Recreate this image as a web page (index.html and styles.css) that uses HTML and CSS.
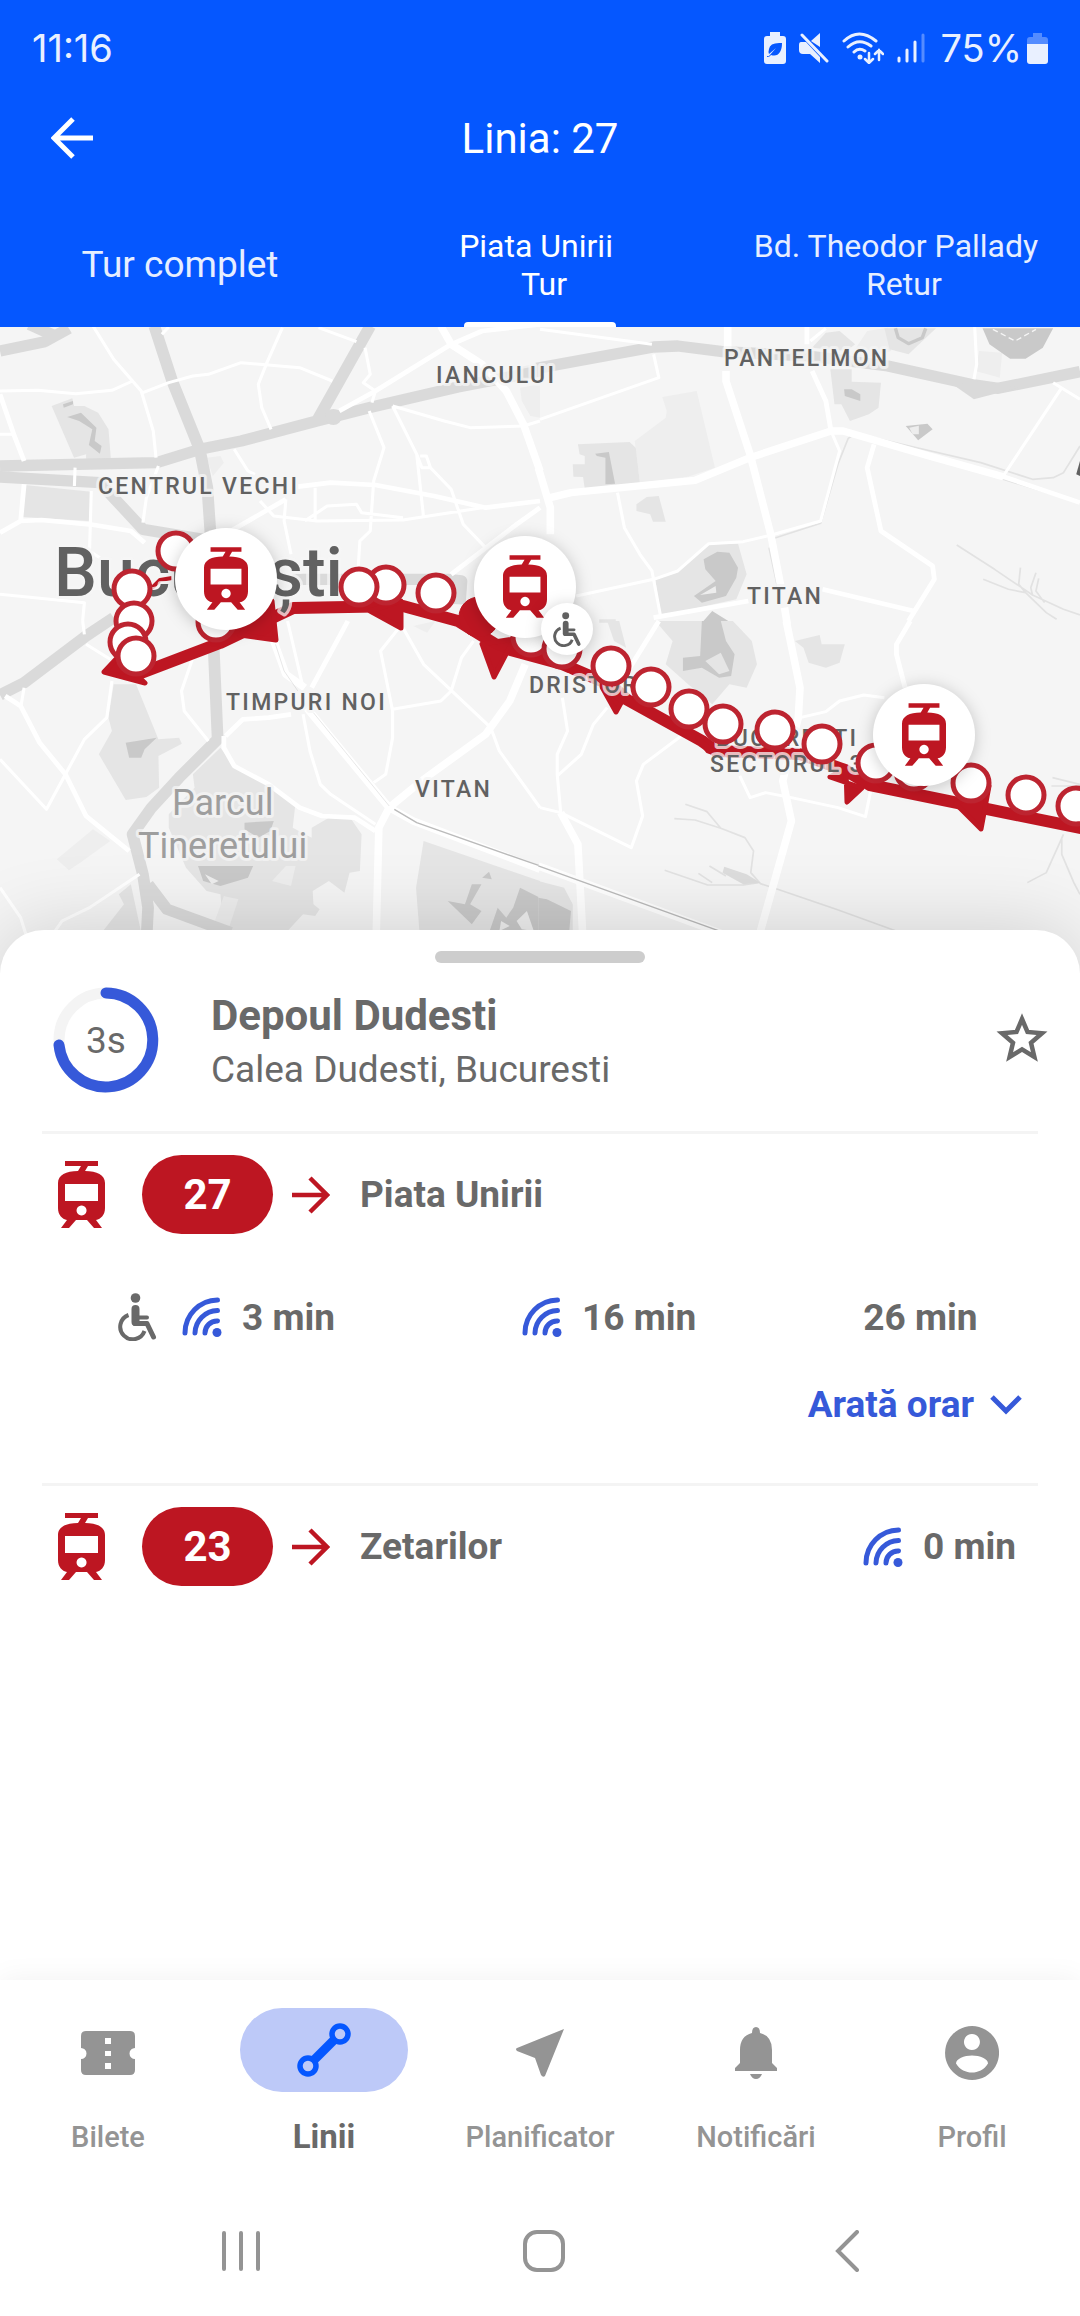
FILE: index.html
```html
<!DOCTYPE html>
<html lang="ro">
<head>
<meta charset="UTF-8">
<meta name="viewport" content="width=device-width, initial-scale=1.0">
<title>Linia: 27</title>
<link rel="stylesheet" href="styles.css">
</head>
<body>

  <!-- Shared icons -->
  <svg class="sprite" aria-hidden="true">
    <symbol id="tram" viewBox="0 0 47 67">
      <path fill-rule="evenodd" d="M7 0H40V5H30L27 10C39 10 47 14 47 22V47C47 54 43 58 38 59L44 67H36L29 59H18L11 67H3L9 59C4 58 0 54 0 47V22C0 14 8 10 20 10L23 5H7ZM7 23V40H40V23ZM23.500 44.500A5 5 0 1 0 23.600 44.500Z"/>
    </symbol>
    <symbol id="live" viewBox="0 0 40 40">
      <g fill="none" stroke="currentColor" stroke-width="5" stroke-linecap="round">
        <path d="M35.500 3A33 33 0 0 0 3 36M35.500 13.500A23 23 0 0 0 13 36M35.500 24A12 12 0 0 0 23 36"/>
      </g>
      <circle cx="35" cy="35.500" r="4.500"/>
    </symbol>
    <symbol id="wheelchair" viewBox="0 0 40 48">
      <circle cx="17.500" cy="5" r="4.800"/>
      <g fill="none" stroke="currentColor" stroke-linecap="round" stroke-linejoin="round">
        <path d="M17.500 16V29" stroke-width="8"/>
        <path d="M19 24.500H29" stroke-width="4"/>
        <path d="M17 30.500H29L35.500 44" stroke-width="5"/>
        <path d="M10.500 22A12.500 12.500 0 1 0 26.500 38" stroke-width="4" stroke-linecap="butt"/>
      </g>
    </symbol>
    <symbol id="arrow" viewBox="0 0 38 38">
      <path d="M0 19H35M18 2L35 19L18 36" fill="none" stroke="currentColor" stroke-width="4.500"/>
    </symbol>
  </svg>

  <header class="header">
    <div class="status">
      <span>11:16</span>
      <div class="status-icons">
        <svg width="22" height="32" viewBox="0 0 22 32"><path fill="currentColor" d="M6 0H16V4H19Q22 4 22 7V29Q22 32 19 32H3Q0 32 0 29V7Q0 4 3 4H6Z"/><path fill="#0557ff" d="M18 11Q6 10 5 17Q4 20 5 22L12 16L5 24H3V25Q6 25 7 23Q13 25 16 20Q18 17 18 11Z"/></svg>
        <svg width="30" height="32" viewBox="0 0 30 32"><path fill="currentColor" d="M21 1V15L12 9ZM2 10H7L21 25V31L11 22H4Q0 22 0 18V13Q0 10 2 10Z"/><path d="M3 3L28 29" stroke="currentColor" stroke-width="3" stroke-linecap="round"/></svg>
        <svg width="42" height="32" viewBox="0 0 42 32"><g fill="none" stroke="currentColor" stroke-width="3" stroke-linecap="round"><path d="M2 9Q17 -5 34 9M6 15Q17 5 29 14M12 20Q17 15 23 19"/><path d="M27 21V30M23 27L27 31L31 27M37 28V18M33 22L37 18L41 22" stroke-width="2.500"/></g><circle cx="18" cy="25" r="2.500" fill="currentColor"/></svg>
        <svg width="28" height="30" viewBox="0 0 28 30"><g stroke="currentColor" stroke-width="3" stroke-linecap="round"><path d="M2 25V28M10 17V28M18 9V28"/><path d="M26 2V28" opacity=".35"/></g></svg>
        <span class="percent">75%</span>
        <svg width="21" height="31" viewBox="0 0 21 31"><path fill="currentColor" opacity=".35" d="M6 0H15V4H18Q21 4 21 7V11H0V7Q0 4 3 4H6Z"/><path fill="currentColor" d="M0 11H21V28Q21 31 18 31H3Q0 31 0 28Z"/></svg>
      </div>
    </div>

    <div class="titlebar">
      <button class="icon-btn" type="button" aria-label="Înapoi">
        <svg width="42" height="42" viewBox="0 0 42 42"><path d="M42 21H4M22 2L3 21L22 40" fill="none" stroke="currentColor" stroke-width="5"/></svg>
      </button>
      <h1>Linia: 27</h1>
    </div>

    <div class="tabs" role="tablist">
      <button class="tab tab-full" type="button" role="tab">Tur complet</button>
      <button class="tab active" type="button" role="tab" aria-selected="true">Piata Unirii&nbsp;<br>&nbsp;Tur</button>
      <button class="tab" type="button" role="tab">Bd. Theodor Pallady&nbsp;<br>&nbsp;Retur</button>
    </div>
  </header>

  <main class="main">
    <svg class="map" viewBox="0 326 1080 646" role="img" aria-label="Harta liniei 27">
      <rect y="320" width="1080" height="660" fill="#f5f5f5"/>

      <!-- north west tile -->
      <g class="tile" transform="translate(0 320) scale(.3444 .3333)">
        <path class="park" d="M150 255L210 232L215 255H245L285 275L315 325L322 415H250V400L215 410ZM72 492L265 512L258 600L65 588Z"/>
        <path class="block" d="M600 410L640 405L650 425L618 465ZM1510 200L1568 190V290L1540 285L1515 240ZM1500 140L1568 125V165H1500Z"/>
        <path class="water" d="M195 288L235 275L280 320L275 360L295 375L290 398L258 372L268 325L230 300ZM183 250L212 240V250L185 260Z"/>
        <path class="avenue" d="M0 90L130 62L200 22M85 10L160 45M448 15L500 180L580 385L602 500L612 650M1075 15L920 300M0 435L455 425L580 385L700 360L920 300L1080 258L1330 198L1568 150M0 450V468L290 485L330 530L415 625L590 655M850 775H1300L1340 780L1335 850"/>
        <circle cx="968" cy="288" r="24" fill="#dadada"/>
        <path class="road" d="M270 15L330 115L410 210L445 330L453 410M460 435L425 530L415 605M0 210L110 208L220 218L325 208L385 180M415 215L490 185L560 165L605 160L700 125L870 140L965 180M820 20L775 125L750 190L760 260L787 325M925 20L1035 62M470 40L490 18M1060 80L1075 160L1055 185L1090 210L1080 245M1140 255L1290 300L1365 320L1520 315L1568 300M1140 255L1210 400L1225 440H1250L1310 505L1345 610L1410 680M1220 405H1238L1250 440M1210 400L1230 590M1072 270L1115 380L1085 480L1075 630L1045 660L1040 740M680 385L720 450L740 460M885 600L950 555L1035 550L1050 575L1170 590M755 540L795 585L920 600L1170 597L1400 560M830 535L825 600L845 700M915 500V600M265 510L260 690L290 710M218 440L216 495M0 820L245 845L240 900M0 340H40"/>
        <path class="street" d="M985 270L1090 210L1310 70L1400 30L1568 10M0 220L40 340L70 420M70 490L60 600L0 635M60 600L120 597L260 610L380 630L420 665M865 497L960 485L1090 492L1260 525L1410 560L1568 540M670 630L830 535M1568 560L1500 610L1310 760"/>
        <path class="boulevard" d="M1280 15L1310 70L1400 130L1470 210L1520 310L1568 450"/>
      </g>

      <!-- north east tile -->
      <g class="tile" transform="translate(540 320) scale(.3444 .3333)">
        <path class="block" d="M355 228L455 210L508 440L430 467L290 485L275 360L365 290L368 270ZM1275 90L1342 95L1335 170L1265 150ZM905 100L950 30L1010 20L1020 90L940 110Z"/>
        <path class="park" d="M110 370L260 363L278 380L290 485L130 503L125 468L97 467L95 430H130V405L115 400ZM280 550L310 528L345 525L365 602H328L320 580L280 570ZM843 145H905V182L990 185L983 260L955 280L900 300L875 250H855ZM790 80L830 35L870 30L915 70L890 90ZM1000 22H1150L1070 100L1015 85ZM335 775L400 750L490 670L575 668L600 760L570 835L350 885ZM172 895H220V905H172Z"/>
        <path class="water" d="M160 398L200 393L218 488L190 490V410L165 405ZM883 205L905 205L930 220L930 240L885 225ZM1285 22H1490L1460 80L1410 113H1365L1305 70ZM1062 315L1125 308L1140 325L1098 358ZM475 715L515 692L550 695L575 740L570 770L540 825L470 845L447 825L510 780L480 745ZM470 905L500 870L555 905Z"/>
        <path fill="#ededed" d="M1072 320L1100 314V340H1082ZM465 822L510 795L512 815Z"/>
        <path d="M1032 22L1040 50L1070 68L1110 50L1120 22" fill="none" stroke="#c9c9c9" stroke-width="10"/>
        <path d="M1315 25L1380 60L1440 25" fill="none" stroke="#f5f5f5" stroke-width="4" stroke-dasharray="16 10"/>
        <path class="avenue" d="M-10 142L330 78L400 75L530 92L780 105L1010 135L1250 190L1330 202L1568 152"/>
        <path d="M1205 195L1260 235L1390 200L1260 180Z" fill="#dadada"/>
        <path class="rail" d="M680 652L815 607L865 430L895 352L905 345M930 340L1060 372L1280 425L1430 475L1490 470L1520 455L1568 375M665 680L690 800M1345 475L1568 545M1210 672L1320 745L1430 822L1520 865L1568 882M1287 775L1360 805L1410 815L1470 875L1500 895M1395 740L1390 790L1410 815M1440 755L1425 800L1430 822M1448 772L1440 810L1465 845"/>
        <path class="road" d="M0 25L325 70M330 100L345 170L0 295M225 515L245 620L290 700L325 750L350 885M845 330L870 390L815 600L680 640L590 662L490 668L400 750L330 775L105 825M1262 15L1268 130L1260 175M1490 185L1568 235M1345 465L1515 200M785 60L830 22"/>
        <path class="street" d="M970 370L950 440L990 630L1140 735L1145 775L1070 900M820 805L1085 870M330 890L605 840M1340 465L1568 545M775 15V70M790 150L830 240L845 330"/>
        <path class="boulevard" d="M545 15V85M540 150V180L610 400L670 640L700 800M710 860L718 910M30 530L90 515L450 478L610 410L845 330H880L1130 405L1345 467M-5 440L30 560V640"/>
        <path fill="#616161" d="M1568 420V465L1557 460Z"/>
      </g>

      <!-- south west tile -->
      <g class="tile" transform="translate(0 620) scale(.3444 .3333)">
        <path class="block" d="M165 715L270 625L320 660L240 720L200 748ZM1200 15L1265 0L1240 35Z"/>
        <path class="park" d="M330 190L395 190L460 355L520 350L528 368L460 405L462 500L425 528L365 537L287 400L325 330L315 290ZM560 460L640 380L680 435L790 495L857 555L850 620L905 650V620L955 590L1020 595L1050 640L1045 750L1015 755L1000 815L955 780L908 810L910 850L928 865L915 885L880 880L830 935H650L640 820L600 810L540 740L490 620V580L565 500ZM1230 660L1568 780V960H1220L1208 800ZM380 790L345 820L360 850L295 935H410Z"/>
        <path class="water" d="M365 365L455 350L420 385L410 410H375ZM710 605L795 600L785 630L750 650L710 625ZM575 735H735L720 770L640 795L590 780ZM1370 790L1398 790L1365 850L1398 870L1370 910L1300 840L1350 850ZM1400 770L1420 752L1428 775ZM1420 935L1445 860L1470 890L1490 860L1510 800L1568 830V935Z"/>
        <path fill="#eeeeee" d="M790 780L830 735H858L845 795ZM650 825L692 835L660 935L615 925ZM595 760L635 780L615 790ZM1500 900L1530 870L1550 930L1515 925ZM1455 900L1480 915L1450 930Z"/>
        <path class="avenue" d="M0 222L70 185L250 45L330 -10M620 70L632 355L520 470L440 560L385 640L415 760L430 860L425 960M430 790L485 865L670 935"/>
        <path class="road" d="M0 415L135 565L190 460L245 355L310 290L325 180M70 200L60 260M250 70L320 115M240 0L245 40M560 110L527 210L535 270L605 360M835 0L880 200M880 280L900 390L930 490L960 520L1090 610M1155 25L1105 90L1140 270V350L1120 460L1085 485M1140 265L1280 240L1310 210L1340 110L1375 60M1170 20L1230 130L1425 320L1450 390L1568 560M405 760L260 860L180 900L160 930M0 800L60 890L75 940"/>
        <path class="street" d="M15 225L60 255L115 365L190 460L250 585L375 690M650 345V380L680 435L780 490L870 560L935 585L1030 590L1090 630M655 345L705 295L780 290L845 280M905 200L1010 0"/>
        <path class="boulevard" d="M795 60L830 160L885 200M890 260L1130 560L1200 600L1568 745M1092 960L1100 620L1130 560L1230 475L1410 340L1480 240L1525 130"/>
        <path class="line line-thin" d="M800 70L825 150L865 210M910 275L1130 555"/>
        <path class="line" d="M1145 565L1210 605L1568 735"/>
      </g>

      <!-- south east tile -->
      <g class="tile" transform="translate(540 620) scale(.3444 .3333)">
        <path class="park" d="M335 0L385 60L365 130L430 190L500 250L550 190L600 200L630 130L615 60L560 0ZM740 60L812 42L818 70H885L870 125L830 140L780 125L765 80ZM-5 780L70 800L95 850V940H-5ZM195 0H230L250 80L215 60Z"/>
        <path class="water" d="M470 0H525L540 60L565 100L555 165L520 170L470 140L415 150V110L465 105ZM-5 830L20 835L90 870L85 930H-5Z"/>
        <path fill="#e5e5e5" d="M480 120L525 95L550 150L520 160Z"/>
        <path class="rail" d="M422 550L485 572L525 622L595 650L620 690L612 755L640 788L690 805L860 865L980 910L1060 940M390 593L450 597L525 622M362 748L487 792H590L635 785M492 735L540 765M460 757L500 785M1515 655V700L1550 785L1568 820M1520 640L1470 755L1415 785M1488 470L1568 490M1485 495H1568"/>
        <path fill="#dddddd" d="M535 737L600 760L640 785L590 790L530 755Z"/>
        <path class="road" d="M755 290L830 272L870 240L940 222L1000 230M65 230L80 330L50 400V460L60 575M50 465L120 400L155 310L195 260M0 560L60 575L265 680L298 585L280 480L300 430L410 345M580 465L610 530L655 515L730 530L865 560L945 587L960 510"/>
        <path class="street" d="M345 0L255 150M1075 0L1035 70V100L1060 200"/>
        <path class="boulevard" d="M715 0L755 200L750 290L705 480L730 600L640 930M60 575L110 670L125 960M-5 735L560 950"/>
        <path class="line" d="M-5 735L560 945"/>
      </g>

      <!-- tram route with its direction arrows -->
      <g fill="#bd1622" stroke="#bd1622" stroke-linejoin="round">
        <path d="M136 674L220 642L293 607L403 605L458 620L500 646L562 663L611 684L626 698L702 740L716 750L800 753L845 769L870 784L953 801L1090 829" fill="none" stroke-width="12"/>
        <path d="M152 587L160 579L172 577" fill="none" stroke-width="4"/>
        <path d="M104 671L118 656L145 682ZM240 634L276 639L272 600ZM370 610L401 600V627ZM482 643L514 638L494 676ZM602 686L622 700L616 711ZM698 737L714 752L708 750ZM830 776L862 787L847 801L846 767ZM956 803L989 785L981 828Z" stroke-width="5"/>
        <circle cx="479" cy="616" r="20"/>
      </g>

      <g class="label">
        <text x="436" y="382">IANCULUI</text>
        <text x="724" y="365">PANTELIMON</text>
        <text x="98" y="493">CENTRUL VECHI</text>
        <text x="747" y="603">TITAN</text>
        <text x="226" y="709">TIMPURI NOI</text>
        <text x="415" y="796">VITAN</text>
        <text x="529" y="692">DRISTOR</text>
        <text x="716" y="745">BUCUREȘTI</text>
        <text x="710" y="771">SECTORUL 3</text>
      </g>
      <g class="label-park">
        <text x="172" y="814">Parcul</text>
        <text x="138" y="857">Tineretului</text>
      </g>
      <text class="label-city" x="54" y="595">București</text>

      <g class="stops">
        <circle cx="176" cy="550" r="18"/><circle cx="132" cy="588" r="18"/><circle cx="134" cy="620" r="18"/>
        <circle cx="128" cy="641" r="18"/><circle cx="136" cy="655" r="18"/><circle cx="216" cy="621" r="18"/>
        <circle cx="386" cy="584" r="18"/><circle cx="359" cy="586" r="18"/><circle cx="436" cy="592" r="18"/>
        <circle cx="531" cy="636" r="18"/><circle cx="562" cy="648" r="18"/><circle cx="611" cy="665" r="18"/>
        <circle cx="651" cy="686" r="18"/><circle cx="689" cy="708" r="18"/><circle cx="723" cy="723" r="18"/>
        <circle cx="775" cy="729" r="18"/><circle cx="822" cy="743" r="18"/><circle cx="876" cy="762" r="18"/>
        <circle cx="914" cy="770" r="18"/><circle cx="971" cy="782" r="18"/><circle cx="1026" cy="794" r="18"/>
        <circle cx="1076" cy="805" r="18"/>
      </g>

      <g class="vehicles">
        <circle cx="226" cy="578" r="51"/><use href="#tram" x="204" y="546" width="44" height="63"/>
        <circle cx="525" cy="586" r="51"/><use href="#tram" x="503" y="554" width="44" height="63"/>
        <circle cx="924" cy="734" r="51"/><use href="#tram" x="902" y="702" width="44" height="63"/>
        <circle cx="567" cy="628" r="26"/><use class="access" href="#wheelchair" x="553" y="611" width="29" height="35"/>
      </g>
    </svg>

    <section class="sheet">
      <div class="handle"></div>

      <div class="station">
        <div class="timer">
          <svg viewBox="0 0 106 106" aria-hidden="true">
            <circle cx="53" cy="53" r="47" fill="none" stroke="#f4f4f4" stroke-width="11"/>
            <path d="M53 6A47 47 0 1 1 6 58" fill="none" stroke="#3659d9" stroke-width="11" stroke-linecap="round"/>
          </svg>
          <span>3s</span>
        </div>
        <div class="station-text">
          <h2>Depoul Dudesti</h2>
          <p>Calea Dudesti, Bucuresti</p>
        </div>
        <button class="icon-btn favorite" type="button" aria-label="Favorit">
          <svg width="52" height="50" viewBox="0 0 52 50"><path d="M26 6L31.500 19L46 20.300L35 29.800L38.400 44L26 36.400L13.600 44L17 29.800L6 20.300L20.500 19Z" fill="none" stroke="currentColor" stroke-width="4.500"/></svg>
        </button>
      </div>

      <article class="line-block">
        <div class="line-row">
          <svg class="tram"><use href="#tram"/></svg>
          <span class="badge">27</span>
          <svg class="arrow"><use href="#arrow"/></svg>
          <h3>Piata Unirii</h3>
        </div>
        <ul class="times">
          <li><svg class="access"><use href="#wheelchair"/></svg><svg class="live"><use href="#live"/></svg>3 min</li>
          <li><svg class="live"><use href="#live"/></svg>16 min</li>
          <li>26 min</li>
        </ul>
        <button class="more" type="button">Arată orar
          <svg width="32" height="21" viewBox="0 0 32 21"><path d="M2 2L16 16L30 2" fill="none" stroke="currentColor" stroke-width="5"/></svg>
        </button>
      </article>

      <article class="line-block">
        <div class="line-row">
          <svg class="tram"><use href="#tram"/></svg>
          <span class="badge">23</span>
          <svg class="arrow"><use href="#arrow"/></svg>
          <h3>Zetarilor</h3>
          <span class="next"><svg class="live"><use href="#live"/></svg>0 min</span>
        </div>
      </article>
    </section>
  </main>

  <nav class="bottom-nav">
    <a href="#bilete">
      <span class="pill"><svg width="54" height="44" viewBox="0 0 54 44"><path fill="currentColor" fill-rule="evenodd" d="M5 0H49Q54 0 54 5V17A5.500 5.500 0 0 0 54 28V39Q54 44 49 44H5Q0 44 0 39V28A5.500 5.500 0 0 0 0 17V5Q0 0 5 0ZM24 7V13H30V7ZM24 20V25H30V20ZM24 32V38H30V32Z"/></svg></span>
      Bilete
    </a>
    <a href="#linii" class="current">
      <span class="pill"><svg width="54" height="54" viewBox="0 0 54 54"><g fill="none" stroke="currentColor"><path d="M16 38L38 16" stroke-width="9"/><circle cx="11" cy="43" r="8" stroke-width="5.500"/><circle cx="43" cy="11" r="8" stroke-width="5.500"/></g></svg></span>
      Linii
    </a>
    <a href="#planificator">
      <span class="pill"><svg width="48" height="48" viewBox="0 0 48 48"><path fill="currentColor" d="M48 0L29 47Q27 49 25 46L19 29L1 22Q-1 20 1 19Z"/></svg></span>
      Planificator
    </a>
    <a href="#notificari">
      <span class="pill"><svg width="44" height="52" viewBox="0 0 44 52"><path fill="currentColor" d="M22 0Q26 0 26 6Q38 9 38 23V36L43 41V44H1V41L6 36V23Q6 9 18 6Q18 0 22 0ZM16 47H28Q26 52 22 52Q18 52 16 47Z"/></svg></span>
      Notificări
    </a>
    <a href="#profil">
      <span class="pill"><svg width="54" height="54" viewBox="0 0 54 54"><path fill="currentColor" fill-rule="evenodd" d="M27 0A27 27 0 1 0 27.100 0ZM27 8A8 8 0 1 1 26.900 8ZM27 29.500C35 29.500 43 33 43 37.500C39 44 33 46.500 27 46.500C21 46.500 15 44 11 37.500C11 33 19 29.500 27 29.500Z"/></svg></span>
      Profil
    </a>
  </nav>

  <footer class="system-nav">
    <button type="button" aria-label="Recente"><svg width="40" height="42" viewBox="0 0 40 42"><path d="M3 3V39M20 3V39M37 3V39" stroke="currentColor" stroke-width="4" stroke-linecap="round"/></svg></button>
    <button type="button" aria-label="Acasă"><svg width="42" height="42" viewBox="0 0 42 42"><rect x="2" y="2" width="38" height="38" rx="12" fill="none" stroke="currentColor" stroke-width="4"/></svg></button>
    <button type="button" aria-label="Înapoi"><svg width="24" height="42" viewBox="0 0 24 42"><path d="M22 2L3 21L22 40" fill="none" stroke="currentColor" stroke-width="4" stroke-linecap="round"/></svg></button>
  </footer>

</body>
</html>
```
FILE: styles.css
```css
* {
  box-sizing: border-box;
}

body {
  font-family: Roboto, sans-serif;
  margin: 0;
  min-height: 100vh;
  display: flex;
  flex-direction: column;
  background-color: #fff;
  color: #696969;
}

h1, h2, h3, p, ul {
  margin: 0;
  padding: 0;
}

button {
  font-family: inherit;
  border: none;
  background: none;
  padding: 0;
  color: inherit;
  cursor: pointer;
}

svg {
  display: block;
  flex-shrink: 0;
}

.sprite {
  position: absolute;
  width: 0;
  height: 0;
}

/* Header */
.header {
  background-color: #0557ff;
  color: #fff;
}

.status {
  display: flex;
  justify-content: space-between;
  align-items: center;
  height: 96px;
  padding: 0 32px;
  font-family: Inter, Roboto, sans-serif;
  font-size: 38px;
  color: #e9f0ff;
}

.status-icons {
  display: flex;
  align-items: center;
  gap: 13px;
}

.percent {
  margin: 0 -8px 0 2px;
}

.titlebar {
  display: grid;
  grid-template-columns: 1fr auto 1fr;
  align-items: center;
  height: 84px;
  padding: 0 51px;
}

.titlebar .icon-btn {
  justify-self: start;
}

.titlebar h1 {
  font-size: 42px;
  font-weight: 400;
}

.tabs {
  display: grid;
  grid-template-columns: repeat(3, 1fr);
  height: 124px;
  margin-top: 23px;
}

.tab {
  position: relative;
  font-size: 32px;
  line-height: 38px;
  color: #e6eeff;
}

.tab-full {
  font-size: 37px;
}

.tab.active {
  color: #fff;
}

.tab.active::after {
  content: "";
  position: absolute;
  left: 50%;
  bottom: 0;
  width: 152px;
  height: 5px;
  margin-left: -76px;
  border-radius: 4px 4px 0 0;
  background-color: #fff;
}

/* Map */
.main {
  flex: 1;
  display: flex;
  flex-direction: column;
}

.map {
  width: 100%;
  height: auto;
}

.tile path {
  stroke-linejoin: round;
}

.park { fill: #e5e5e5; }
.block { fill: #eee; }
.water { fill: #c9c9c9; }

.avenue, .road, .street, .boulevard, .rail, .line {
  fill: none;
}

.avenue {
  stroke: #dadada;
  stroke-width: 34px;
}

.road {
  stroke: #fff;
  stroke-width: 9px;
}

.street {
  stroke: #fff;
  stroke-width: 14px;
}

.boulevard {
  stroke: #fff;
  stroke-width: 22px;
}

.rail {
  stroke: #e2e2e2;
  stroke-width: 5px;
}

.line {
  stroke: #bbb;
  stroke-width: 4px;
}

.line-thin {
  stroke-width: 1px;
}

.label, .label-park, .label-city {
  fill: #616161;
  stroke: rgba(245, 245, 245, 0.75);
  stroke-width: 6px;
  stroke-linejoin: round;
  paint-order: stroke;
  font-weight: 500;
}

.label {
  font-size: 23px;
  letter-spacing: 0.1em;
}

.label-park {
  font-size: 36px;
  font-weight: 400;
  fill: #9e9e9e;
}

.label-city {
  font-size: 68px;
}

.stops circle {
  fill: #fff;
  stroke: #bd2430;
  stroke-width: 5px;
}

.vehicles {
  color: #616161;
  fill: #bd1622;
}

.vehicles circle {
  fill: #fff;
  filter: drop-shadow(0 2px 8px rgba(0, 0, 0, 0.2));
}

.vehicles .access {
  fill: #616161;
}

/* Bottom sheet */
.sheet {
  position: relative;
  flex: 1;
  margin-top: -43px;
  padding-top: 21px;
  border-radius: 44px 44px 0 0;
  background-color: #fff;
  box-shadow: 0 0 80px rgba(0, 0, 0, 0.16);
}

.handle {
  width: 210px;
  height: 12px;
  margin: 0 auto;
  border-radius: 6px;
  background-color: #cdcdcd;
}

.station {
  display: flex;
  align-items: flex-start;
  padding: 24px 32px 34px 53px;
}

.timer {
  display: grid;
  place-items: center;
  width: 106px;
  height: 106px;
  font-size: 37px;
}

.timer > * {
  grid-area: 1 / 1;
}

.timer svg {
  width: 100%;
}

.station-text {
  flex: 1;
  padding: 2px 0 0 52px;
}

.station-text h2 {
  font-size: 42px;
  line-height: 54px;
}

.station-text p {
  font-size: 37px;
  line-height: 54px;
}

.favorite {
  margin-top: 26px;
}

.line-block {
  margin: 0 42px;
  padding: 21px 22px 0 16px;
  border-top: 3px solid #f4f4f4;
}

.line-row {
  display: flex;
  align-items: center;
}

.line-row h3 {
  margin-left: 30px;
  font-size: 37px;
}

.tram {
  width: 47px;
  height: 67px;
  fill: #bd1622;
}

.badge {
  width: 131px;
  margin: 0 19px 0 37px;
  border-radius: 40px;
  font-size: 42px;
  line-height: 79px;
  font-weight: 700;
  text-align: center;
  background-color: #bd1622;
  color: #fff;
}

.arrow {
  width: 38px;
  height: 38px;
  color: #bd1622;
}

.live {
  width: 40px;
  height: 40px;
  margin-right: 20px;
  color: #3659d9;
  fill: #3659d9;
}

.access {
  width: 40px;
  height: 48px;
  margin-right: 24px;
  fill: #696969;
}

.times {
  display: grid;
  grid-template-columns: 45% 38% 17%;
  padding: 56px 0 0 60px;
  list-style: none;
}

.times li, .next {
  display: flex;
  align-items: center;
  height: 54px;
  font-size: 37px;
  font-weight: 700;
}

.next {
  margin-left: auto;
}

.more {
  display: flex;
  align-items: center;
  gap: 16px;
  margin: 33px -6px 50px auto;
  font-size: 37px;
  line-height: 56px;
  font-weight: 700;
  color: #3659d9;
}

/* Bottom navigation */
.bottom-nav {
  position: relative;
  display: grid;
  grid-template-columns: repeat(5, 1fr);
  padding: 28px 0 33px;
  background-color: #fff;
  box-shadow: 0 0 28px rgba(0, 0, 0, 0.06);
}

.bottom-nav a {
  display: flex;
  flex-direction: column;
  align-items: center;
  gap: 25px;
  font-size: 29px;
  line-height: 40px;
  font-weight: 500;
  text-decoration: none;
  color: #949494;
}

.pill {
  display: grid;
  place-items: center;
  width: 168px;
  height: 84px;
  padding-top: 6px;
  border-radius: 42px;
}

.bottom-nav .current {
  font-size: 33px;
  font-weight: 700;
  color: #696969;
}

.current .pill {
  padding: 0;
  background-color: #bdc9f8;
  color: #0557ff;
}

.system-nav {
  position: relative;
  display: grid;
  grid-template-columns: repeat(3, 1fr);
  place-items: center;
  height: 126px;
  padding: 0 82px 4px 90px;
  background-color: #fff;
  color: #949494;
}
```
